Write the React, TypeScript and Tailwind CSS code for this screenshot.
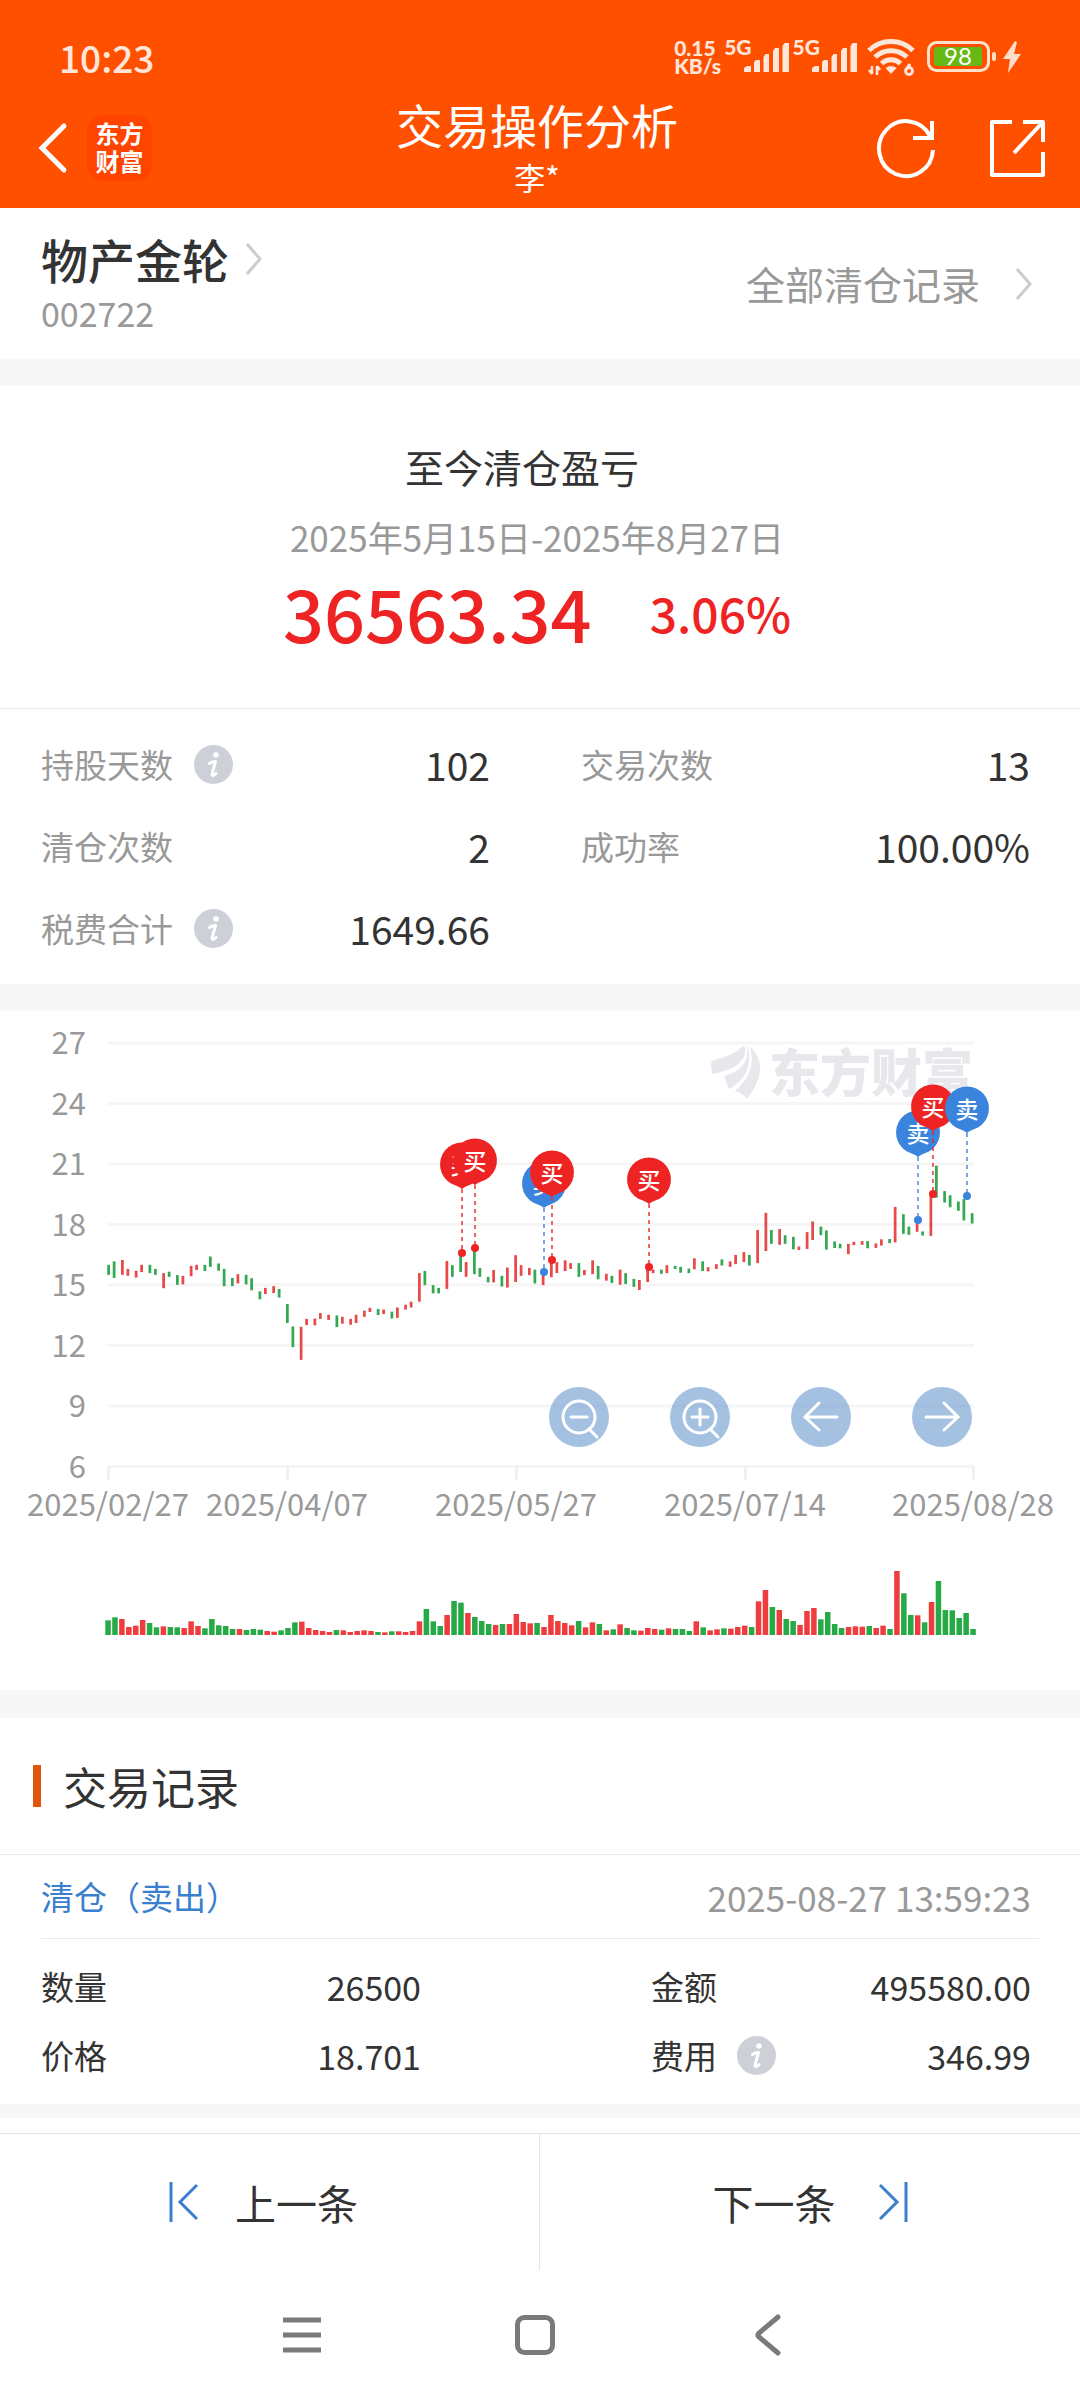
import type { ReactNode } from 'react';

const FONT = "font-['Noto_Sans_CJK_SC','Noto_Sans',sans-serif]";

const RED = '#e84a4a';
const GREEN = '#34a853';

// One entry per trading day: colour (r = up, g = down), high and low on the plot's scale
const CANDLES = `
g740-769 g730-778 r726-769 r752-772 r757-777 r740-761 g740-764 g752-769 r764-808 g760-775
g770-798 r772-797 r743-773 r740-755 g740-758 g716-746 g736-757 g752-802 g778-802 r767-794
g769-797 g779-814 g817-840 r807-825 r802-822 g810-835 g854-909 g919-979 r920-1016 r897-915
r896-916 r880-897 r885-900 g887-921 r891-911 r897-914 r885-909 r873-891 r865-877 g868-886
r870-883 g876-896 r864-894 r856-870 r847-864 r764-847 g758-799 g799-823 g807-823 r729-810
g741-775 g707-761 r732-775 g697-767 g749-775 g775-791 r755-791 g772-803 r748-806 r712-790
r741-772 r749-770 g754-794 r765-799 r727-776 r732-764 r727-758 r735-752 g735-775 r755-770
r727-767 g743-782 r766-786 g772-793 r754-798 g764-796 g781-804 r784-813 r745-790 r754-764
g754-766 r741-764 g743-752 g746-763 g751-764 r721-753 g730-758 r747-759 r738-752 g724-742
r730-746 r711-738 r703-732 g711-742 r639-735 r589-700 g639-679 r636-682 g654-679 g659-695
r687-697 r645-694 r614-668 g629-654 g640-696 g672-691 g679-692 r679-709 r673-683 r671-682
g671-692 r678-691 r666-684 g665-677 r572-675 g593-650 g629-653 r618-644 g643-655 r540-656
g452-545 g526-559 g538-573 g556-583 g549-611 g590-620`
  .trim()
  .split(/\s+/)
  .map((s) => {
    const [high, low] = s.slice(1).split('-').map(Number);
    return { color: s[0] === 'r' ? RED : GREEN, high: high / 2.904 - 1, low: low / 2.904 - 1 };
  });

const VOLUMES = `
g44 g53 r48 r24 r28 r45 g36 g23 r26 g24 g23 r21 r41 r27 g20 g48 g29 g27 g18 r18
g15 g18 g16 r12 r10 g14 g21 g38 r40 r21 r15 r12 r9 g15 r14 r9 r12 r14 r12 g9
r8 g11 r11 r9 r12 r41 g78 g41 g27 r60 g102 g97 r66 g54 g42 g33 r30 g33 r33 r63
r39 r35 g36 r24 r60 r42 r36 r29 g42 r23 r38 g33 r14 g17 r32 g21 g14 r13 r21 r18
g16 r20 g18 g18 g12 r41 g23 r14 r17 g20 r19 r24 r28 g24 r101 r135 g84 r75 g48 g42
r30 r72 r81 g47 g69 g33 g21 r24 r26 r25 g27 r21 r28 g18 r192 g125 g60 r59 g38 r99
g162 g75 g74 g51 g66 g18`
  .trim()
  .split(/\s+/)
  .map((s) => ({ color: s[0] === 'r' ? '#ee3c3f' : '#25aa45', height: Number(s.slice(1)) / 3 }));

const PRICES = [27, 24, 21, 18, 15, 12, 9, 6];

const DATES = [
  { x: 108, label: '2025/02/27' },
  { x: 287, label: '2025/04/07' },
  { x: 516, label: '2025/05/27' },
  { x: 745, label: '2025/07/14' },
  { x: 973, label: '2025/08/28' },
];

const MARKERS = [
  { type: 'buy', x: 462, tip: 178, dot: 242 },
  { type: 'buy', x: 475, tip: 174, dot: 237 },
  { type: 'sell', x: 544, tip: 197, dot: 261 },
  { type: 'buy', x: 552, tip: 186, dot: 249 },
  { type: 'buy', x: 649, tip: 193, dot: 256 },
  { type: 'sell', x: 918, tip: 146, dot: 209 },
  { type: 'buy', x: 933, tip: 120, dot: 183 },
  { type: 'sell', x: 967, tip: 122, dot: 185 },
];

const STATS = [
  { label: '持股天数', value: '102', info: true },
  { label: '交易次数', value: '13' },
  { label: '清仓次数', value: '2' },
  { label: '成功率', value: '100.00%' },
  { label: '税费合计', value: '1649.66', info: true },
];

function Chevron() {
  return (
    <svg width="16" height="32" viewBox="0 0 16 32" fill="none" stroke="#ccc" strokeWidth="3">
      <path d="M1 1l13 15L1 31" />
    </svg>
  );
}

function InfoButton({ label }: { label: string }) {
  return (
    <button type="button" aria-label={`${label}说明`} className="shrink-0">
      <svg width="39" height="39" viewBox="0 0 39 39" className="block">
        <circle cx="19.5" cy="19.5" r="19.5" fill="#cdd0d6" />
        <circle cx="22" cy="10" r="2.8" fill="#fff" />
        <path
          d="M15.500 18.500C17.500 17 19 16.500 21.500 16.500L18.200 28.500C17.600 31 19 31.500 22 28.500"
          fill="none"
          stroke="#fff"
          strokeWidth="3"
          strokeLinecap="round"
          strokeLinejoin="round"
        />
      </svg>
    </button>
  );
}

function SignalBars() {
  return (
    <svg width="45" height="29" viewBox="0 0 45 29" fill="#ffe6da" className="-ml-2">
      <path d="M0 29v-4l3-2h4v6zM10 29V19l2-2h4v12zM19.500 29V14l2-3h3.500v18zM29 29V8l2-3h4v24zM38.500 29V3l2-3H45v29z" />
    </svg>
  );
}

function StatusBar() {
  return (
    <div className="flex h-[104px] items-center pt-[10px] pl-[59px] pr-[59px] text-[#ffe6da]">
      <time className="text-[37px] leading-none font-medium">10:23</time>
      <div className="ml-auto flex items-center font-['Lato',sans-serif] text-[21px] leading-[18px] font-black">
        <div className="w-[50px]">
          0.15
          <br />
          KB/s
        </div>
        <span className="self-start">5G</span>
        <SignalBars />
        <span className="ml-1 self-start">5G</span>
        <SignalBars />
        <svg width="48" height="38" viewBox="0 0 48 38" fill="none" stroke="#ffe6da" className="ml-[10px]">
          <path d="M2 12.500C14 .5 34 .5 46 12.500" strokeWidth="5" />
          <path d="M8 19C17 10.500 31 10.500 40 19" strokeWidth="5" />
          <path d="M14.500 25.500c5.500-5 13.500-5 19 0" strokeWidth="5" />
          <path d="M18.500 30q5.500-4 11 0L24 36z" fill="#ffe6da" stroke="none" />
          <path d="M5 28v8M5 36l-3-4M10 37v-9M10 28l3 4" strokeWidth="2.500" />
          <path d="M43 26l-4 6" strokeWidth="3" />
          <circle cx="42" cy="33" r="3.500" strokeWidth="2.800" />
        </svg>
        <svg width="70" height="36" viewBox="0 -2 70 36" className="ml-[12px]">
          <rect x="1.500" y="1.500" width="60" height="28" rx="8" fill="none" stroke="#ffe0c8" strokeWidth="3" />
          <rect x="7" y="6" width="48" height="19" rx="3" fill="#66b814" />
          <rect x="65" y="11" width="4" height="9" rx="2" fill="#ffe0c8" />
          <text x="31" y="24" textAnchor="middle" className="fill-white text-[24px] font-normal">
            98
          </text>
        </svg>
        <svg width="18" height="32" viewBox="0 0 18 32" fill="#ffddcb" className="ml-[6px]">
          <path d="M12 0L0 18h7L5 32 18 13h-7l3-12z" />
        </svg>
      </div>
    </div>
  );
}

function Header() {
  return (
    <header className="bg-[#ff5000] text-white">
      <StatusBar />
      <div className="flex h-[104px] items-start justify-between pr-[34px] pl-[38px]">
        <div className="flex w-[240px] items-center gap-[19px] pt-[11px]">
          <button type="button" aria-label="返回">
            <svg width="30" height="52" viewBox="0 0 30 52" fill="none" stroke="#fff" strokeWidth="5" strokeLinecap="round">
              <path d="M26 4L4 26l22 22" />
            </svg>
          </button>
          <div className="flex h-[66px] w-[65px] flex-col items-center justify-center rounded-2xl bg-[#ff4400] pb-[2px] text-[24px] leading-[28px] font-bold">
            <span>东方</span>
            <span>财富</span>
          </div>
        </div>
        <div className="flex flex-col items-center pr-[10px]">
          <h1 className="text-[47px] leading-[40px]">交易操作分析</h1>
          <p className="pt-[13px] text-[31px] leading-[40px]">李*</p>
        </div>
        <div className="flex w-[240px] justify-end gap-[52px] pt-[15px]">
          <button type="button" aria-label="刷新">
            <svg width="60" height="60" viewBox="0 0 60 60" fill="none" stroke="#fff" strokeWidth="4">
              <path d="M57 31A27 27.500 0 1 1 54 17" />
              <path d="M56 2v17H37" />
            </svg>
          </button>
          <button type="button" aria-label="分享">
            <svg width="58" height="60" viewBox="0 0 58 60" fill="none" stroke="#fff" strokeWidth="4" strokeLinejoin="round">
              <path d="M24 3H4v53h51V33" />
              <path d="M35 3h20v20M54 4L26 34" />
            </svg>
          </button>
        </div>
      </div>
    </header>
  );
}

function Marker({ type, x, tip, dot }: { type: string; x: number; tip: number; dot: number }) {
  const color = type === 'buy' ? '#ee2424' : '#3a84de';
  return (
    <g>
      <path d={`M${x} ${tip}V${dot}`} stroke={color} strokeWidth="2" strokeDasharray="4 4" opacity="0.700" />
      <circle cx={x} cy={dot} r="4" fill={color} />
      <path
        transform={`translate(${x} ${tip})`}
        d="M0 0C-3-2.500-7-4-11-5.500A22 22 0 1 1 11-5.500C7-4 3-2.500 0 0z"
        fill={color}
      />
      <text x={x} y={tip - 15} textAnchor="middle" className="fill-white text-[23px] font-medium">
        {type === 'buy' ? '买' : '卖'}
      </text>
    </g>
  );
}

function RoundButton({ label, children }: { label: string; children: ReactNode }) {
  return (
    <button type="button" aria-label={label} className="size-[60px] rounded-full bg-[#4b83c5]/50">
      <svg viewBox="0 0 60 60" fill="none" stroke="#fff" strokeWidth="3" strokeLinecap="round">
        {children}
      </svg>
    </button>
  );
}

function Chart() {
  return (
    <section className="relative">
      <svg viewBox="0 0 1080 679" className="block w-full">
        {PRICES.map((price, i) => (
          <g key={price}>
            <path d={`M108 ${32 + i * 60.5}H974`} stroke="#f5f5f6" strokeWidth="3" />
            <text x="86" y={43 + i * 60.5} textAnchor="end" className="fill-[#999] text-[31px]">
              {price}
            </text>
          </g>
        ))}
        {DATES.map(({ x, label }) => (
          <g key={label}>
            <path d={`M${x + 0.5} 455v14`} stroke="#f0f0f1" strokeWidth="3" />
            <text x={x} y="505" textAnchor="middle" className="fill-[#999] text-[31px]">
              {label}
            </text>
          </g>
        ))}

        {/* Watermark */}
        <g className="fill-[#e8e7ec]">
          <path d="M743 35C735 43 725 46 714 49C711 50 711 53 711 55L712 63C730 60 748 52 745 36z" />
          <path d="M747 36C750 52 738 62 724 65L729 78C743 70 753 58 748 36z" />
          <path d="M750 36C757 41 760 50 760 57C760 69 754 78 747 88C744 84 740 81 735 80C749 68 755 55 750 36z" />
          <text x="769" y="81" className="text-[51px] font-black">
            东方财富
          </text>
        </g>

        {CANDLES.map(({ color, high, low }, i) => (
          <rect
            key={i}
            x={2.75 * (39 + Math.floor(2.516 * i))}
            y={high}
            width="2.750"
            height={low - high}
            fill={color}
          />
        ))}
        {VOLUMES.map(({ color, height }, i) => (
          <rect key={i} x={105.3 + 6.92 * i} y={624 - height} width="5.500" height={height} fill={color} />
        ))}
        {MARKERS.map((m) => (
          <Marker key={m.x} {...m} />
        ))}
      </svg>

      <div className="absolute top-[376px] right-[108px] flex gap-[61px]">
        <RoundButton label="缩小">
          <circle cx="30" cy="30" r="16" />
          <path d="M22 30h16M40 42l8 8" />
        </RoundButton>
        <RoundButton label="放大">
          <circle cx="30" cy="30" r="16" />
          <path d="M22 30h16M30 22v16M40 42l8 8" />
        </RoundButton>
        <RoundButton label="向左">
          <path d="M46 30H14M28 16L14 30l14 13" />
        </RoundButton>
        <RoundButton label="向右">
          <path d="M14 30h32M32 16l14 14-14 13" />
        </RoundButton>
      </div>
    </section>
  );
}

function RecordField({ label, value, info }: { label: string; value: string; info?: boolean }) {
  return (
    <div className="flex h-[69px] items-center">
      <dt className="flex items-center gap-[20px] text-[33px]">
        {label}
        {info && <InfoButton label={label} />}
      </dt>
      <dd className="ml-auto text-[34px]">{value}</dd>
    </div>
  );
}

export default function App() {
  return (
    <div className={`${FONT} bg-white leading-none text-[#333]`}>
      <Header />

      <section className="flex h-[151px] items-center justify-between pr-[48px] pl-[41px]">
        <div>
          <a href="#stock" className="flex items-center gap-[17px] text-[47px] leading-[58px] font-medium">
            物产金轮
            <Chevron />
          </a>
          <p className="text-[34px] leading-[50px] text-[#999]">002722</p>
        </div>
        <a href="#records" className="flex items-center gap-[36px] text-[39px] text-[#999]">
          全部清仓记录
          <Chevron />
        </a>
      </section>

      <section className="flex flex-col items-center border-t-[27px] border-[#f7f7f7] pt-[50px] pr-[6px] pb-[54px]">
        <h2 className="pr-[30px] text-[39px] leading-[60px]">至今清仓盈亏</h2>
        <p className="pt-[16px] text-[35px] leading-[50px] text-[#999]">2025年5月15日-2025年8月27日</p>
        <p className="flex items-center gap-[58px] pt-[8px] font-medium text-[#ee2424]">
          <span className="text-[72px] leading-[84px]">36563.34</span>
          <span className="text-[48px]">3.06%</span>
        </p>
      </section>

      <dl className="grid grid-cols-2 border-t border-b-[27px] border-t-[#eaeaea] border-b-[#f7f7f7] pt-[14px] pb-[15px]">
        {STATS.map(({ label, value, info }) => (
          <div key={label} className="flex h-[82px] items-center pr-[50px] pl-[41px]">
            <dt className="flex items-center gap-[21px] text-[33px] text-[#999]">
              {label}
              {info && <InfoButton label={label} />}
            </dt>
            <dd className="ml-auto text-[39px]">{value}</dd>
          </div>
        ))}
      </dl>

      <Chart />

      <section className="border-y-[#f7f7f7] border-t-[28px] border-b-[14px]">
        <h2 className="flex h-[136px] items-center gap-[22px] pl-[33px] text-[44px]">
          <span className="h-[42px] w-2 bg-[#e2550f]" />
          交易记录
        </h2>
        <div className="border-t border-[#eaeaea] pr-[41px] pl-[41px]">
          <div className="flex h-[84px] items-center justify-between border-b border-[#eaeaea] pr-[8px]">
            <h3 className="text-[33px] text-[#3a7fce]">清仓（卖出）</h3>
            <time className="text-[35px] text-[#999]">2025-08-27 13:59:23</time>
          </div>
          <dl className="grid grid-cols-2 gap-x-[230px] pt-[13px] pr-[8px] pb-[14px]">
            <RecordField label="数量" value="26500" />
            <RecordField label="金额" value="495580.00" />
            <RecordField label="价格" value="18.701" />
            <RecordField label="费用" value="346.99" info />
          </dl>
        </div>
      </section>

      <div className="mt-[15px] grid h-[137px] grid-cols-2 border-t border-[#e5e5e5] text-[41px]">
        <button
          type="button"
          className="flex items-center justify-center gap-[36px] border-r border-[#e5e5e5] pr-[12px]"
        >
          <svg width="30" height="40" viewBox="0 0 30 40" fill="none" stroke="#3a7fce" strokeWidth="3">
            <path d="M2 0v40M28 3L11 20l17 17" />
          </svg>
          上一条
        </button>
        <button type="button" className="flex items-center justify-center gap-[42px]">
          下一条
          <svg width="30" height="40" viewBox="0 0 30 40" fill="none" stroke="#3a7fce" strokeWidth="3">
            <path d="M28 0v40M2 3l17 17L2 37" />
          </svg>
        </button>
      </div>

      <nav className="flex h-[130px] items-center justify-center gap-[189px] pr-[10px]">
        <button type="button" aria-label="菜单">
          <svg width="44" height="44" viewBox="0 0 44 44" fill="none" stroke="#7a7a7a" strokeWidth="5">
            <path d="M3 7h38M3 22h38M3 37h38" />
          </svg>
        </button>
        <button type="button" aria-label="主页">
          <svg width="44" height="44" viewBox="0 0 44 44" fill="none" stroke="#7a7a7a" strokeWidth="5">
            <rect x="4.500" y="4.500" width="35" height="35" rx="7" />
          </svg>
        </button>
        <button type="button" aria-label="后退">
          <svg width="44" height="44" viewBox="0 0 44 44" fill="none" stroke="#7a7a7a" strokeWidth="5" strokeLinecap="round">
            <path d="M32 4L13 20q-2 2 0 4l19 16" />
          </svg>
        </button>
      </nav>
    </div>
  );
}
